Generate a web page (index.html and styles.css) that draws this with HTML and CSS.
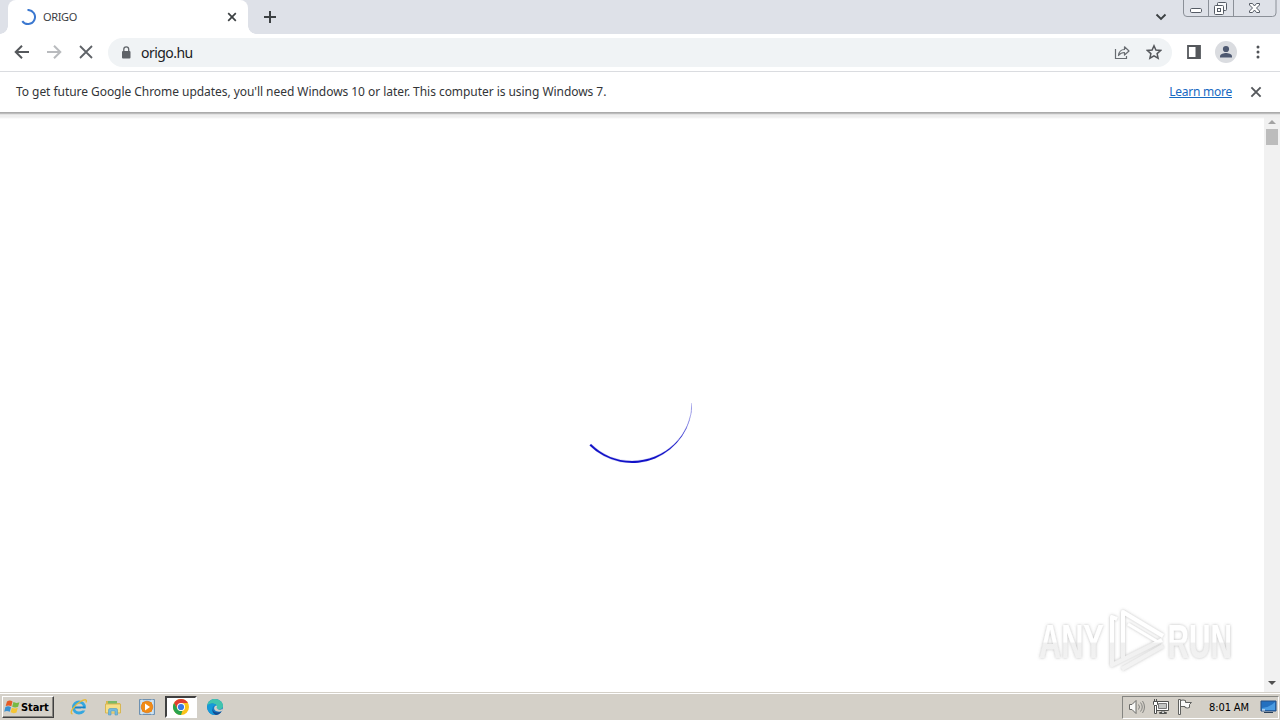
FILE: index.html
```html
<!DOCTYPE html>
<html lang="en">
<head>
<meta charset="utf-8">
<title>ORIGO</title>
<link rel="stylesheet" href="styles.css">
</head>
<body>
<div class="desktop">
  <header class="tabstrip">
    <div class="tab">
      <svg class="tab-spinner" width="16" height="16" viewBox="0 0 16 16"><path d="M7.500 1A7 7 0 1 1 2.300 12.060" fill="none" stroke="#3b78d0" stroke-width="2"/></svg>
      <span class="tab-title">ORIGO</span>
      <svg width="10" height="10" viewBox="0 0 10 10"><path d="M1.2 1.2 8.8 8.8M8.8 1.2 1.2 8.8" stroke="#3c4043" stroke-width="1.7"/></svg>
    </div>
    <svg class="new-tab" width="14" height="14" viewBox="0 0 14 14"><path d="M7 1v12M1 7h12" stroke="#3c4043" stroke-width="2"/></svg>
    <svg class="tab-search" width="12" height="8" viewBox="0 0 12 8"><path d="m1.5 1.5 4.5 4.5 4.500-4.500" fill="none" stroke="#3c4043" stroke-width="1.9"/></svg>
    <svg class="window-buttons" width="94" height="18" viewBox="0 0 94 18" fill="none">
      <path d="M.5 0v13q0 3.500 3.500 3.500h85.500q3.500 0 3.500-3.500V0M25.500 0v16M50.500 0v16" stroke="#8b9098"/>
      <g stroke="#555b65"><rect x="7.500" y="8.500" width="11" height="4" rx="1.200" fill="#fff"/>
      <rect x="34.500" y="2.500" width="9" height="8" rx="1" fill="#f7f8fa"/><rect x="31.500" y="5.500" width="9" height="9" rx="1" fill="#fff"/><rect x="34.500" y="8.500" width="3" height="3"/>
      <path d="M66.500 3.500h3l2 2.500 2-2.500h3v1.500l-3 3 3 3v1.500h-3l-2-2.500-2 2.500h-3v-1.500l3-3-3-3z" fill="#fff"/></g>
    </svg>
  </header>

  <nav class="toolbar">
    <svg class="back" width="16" height="16" viewBox="0 0 16 16"><path d="M15 8H2M8 1.700 1.700 8 8 14.300" fill="none" stroke="#55585c" stroke-width="2"/></svg>
    <svg class="forward" width="16" height="16" viewBox="0 0 16 16"><path d="M1 8h13M8 1.700 14.300 8 8 14.300" fill="none" stroke="#b9bbbe" stroke-width="2"/></svg>
    <svg class="stop" width="14" height="14" viewBox="0 0 14 14"><path d="m1 1 12 12M13 1 1 13" stroke="#5f6368" stroke-width="1.800"/></svg>
    <div class="omnibox">
      <svg width="10" height="13" viewBox="0 0 10 13"><rect x="1" y="5" width="8.500" height="7.500" rx="1" fill="#5f6368"/><path d="M2.800 5.500V3.300a2.450 2.450 0 0 1 4.900 0v2.200" fill="none" stroke="#5f6368" stroke-width="1.300"/></svg>
      <span class="url">origo.hu</span>
      <svg class="share" width="16" height="15" viewBox="0 0 16 15" fill="none" stroke="#686c71" stroke-width="1.200"><path d="M1.500 4v9.500h11V11"/><path d="M4.500 10.500c.5-4 2.500-6 6-6V1.800L15 6l-4.500 4V7.500c-3 0-4.500 1-6 3z" stroke-linejoin="round"/></svg>
      <svg class="star" width="16" height="16" viewBox="0 0 16 16"><path d="m8 1.800 1.900 4.300 4.700.4-3.500 3.100 1 4.600L8 11.800l-4.100 2.400 1-4.600-3.500-3.100 4.700-.4z" fill="none" stroke="#55585c" stroke-width="1.500"/></svg>
    </div>
    <svg class="side-panel" width="14" height="14" viewBox="0 0 14 14"><path d="M1 1h12v12H1z" fill="none" stroke="#55585c" stroke-width="1.800"/><path d="M8.500 1H13v12H8.500z" fill="#55585c"/></svg>
    <svg class="avatar" width="22" height="22" viewBox="0 0 22 22"><circle cx="11" cy="11" r="11" fill="#dadce0"/><circle cx="11" cy="8" r="3.100" fill="#4d5870"/><path d="M5 16.500v-1.300c0-2 4-3.100 6-3.100s6 1.100 6 3.100v1.300z" fill="#4d5870"/></svg>
    <svg class="kebab" width="4" height="14" viewBox="0 0 4 14" fill="#505357"><circle cx="2" cy="2" r="1.500"/><circle cx="2" cy="7" r="1.500"/><circle cx="2" cy="12" r="1.500"/></svg>
  </nav>

  <section class="infobar">
    <span class="notice">To get future Google Chrome updates, you'll need Windows 10 or later. This computer is using Windows 7.</span>
    <a class="learn">Learn more</a>
    <svg width="12" height="12" viewBox="0 0 12 12"><path d="m1.400 1.400 9.200 9.200M10.600 1.400l-9.200 9.200" stroke="#55585c" stroke-width="1.900"/></svg>
  </section>

  <main class="viewport">
    <div class="page">
      <svg class="loader" width="120" height="120" viewBox="0 0 120 120"><path d="M120 60A60 60 0 0 1 17.600 102.400L19 101A58 58 0 0 0 60 118A60 58 0 0 0 120 60z" fill="#1212c8" stroke="#1212c8" stroke-width=".2"/></svg>
      <svg class="watermark" width="220" height="76" viewBox="0 0 220 76">
        <defs><linearGradient id="fade" gradientUnits="userSpaceOnUse" x1="0" y1="8" x2="0" y2="70"><stop offset="0" stop-color="#fff"/><stop offset=".52" stop-color="#fff"/><stop offset=".53" stop-color="#f0f0f0"/><stop offset="1" stop-color="#f3f3f3"/></linearGradient>
        <linearGradient id="text-fade" gradientUnits="userSpaceOnUse" x1="0" y1="-48" x2="0" y2="14"><stop offset="0" stop-color="#fff"/><stop offset=".52" stop-color="#fff"/><stop offset=".53" stop-color="#f0f0f0"/><stop offset="1" stop-color="#f3f3f3"/></linearGradient>
        <filter id="halo" x="-10%" y="-15%" width="120%" height="130%"><feDropShadow dx="0" dy="0" stdDeviation="1.600" flood-color="#777" flood-opacity=".5"/></filter></defs>
        <g filter="url(#halo)">
          <g class="brand" fill="url(#text-fade)"><text transform="translate(9 56) scale(.64 1)">ANY</text><text transform="translate(137.500 56) scale(.62 1)">RUN</text></g>
          <g fill="none" stroke="url(#fade)" stroke-width="4" stroke-linejoin="round">
            <path d="M87 17l-5-2v48l50-25"/>
            <path d="M93 56V10l40 24"/>
            <path d="M98 22l30 18" stroke-width="3"/>
            <path d="M133 44 92 67"/>
          </g>
        </g>
      </svg>
    </div>
    <aside class="scrollbar">
      <svg width="8" height="4" viewBox="0 0 8 4"><path d="m0 4 4-4 4 4z" fill="#a3a3a3"/></svg>
      <div class="thumb"></div>
      <svg class="scroll-down" width="8" height="4" viewBox="0 0 8 4"><path d="m0 0 4 4 4-4z" fill="#505050"/></svg>
    </aside>
  </main>

  <footer class="taskbar">
    <div class="start">
      <svg width="17" height="16" viewBox="0 0 17 16"><path d="M3 2.500q3-1.800 5.500.1L7.300 7.300Q4.700 5.700 1.700 7z" fill="#e65b25"/><path d="M9.400 3.100q2.800 1.600 6 .1l-1.300 4.600q-3 1.400-5.900-.1z" fill="#78b943"/><path d="M1.400 8q3-1.400 5.600.3l-1.200 4.500Q3 11.300.2 12.700z" fill="#3a91d1"/><path d="M7.900 8.700q2.900 1.500 5.900.1l-1.300 4.600q-3 1.500-5.900-.1z" fill="#f5c534"/></svg>
      <span>Start</span>
    </div>
    <div class="quick">
      <svg width="18" height="18" viewBox="0 0 18 18"><circle cx="9" cy="9.500" r="5.500" fill="none" stroke="#35a7df" stroke-width="3"/><path d="M5 9.500h10" stroke="#1683c9" stroke-width="2"/><path d="M11 11.500h6" stroke="#d4d0c8" stroke-width="2"/><path d="M2.500 16c-4-1 2-9 8-12.500 4-2.400 7-2.500 5.500 1" fill="none" stroke="#e6ba3b" stroke-width="1.400"/></svg>
    </div>
    <div class="quick">
      <svg width="18" height="18" viewBox="0 0 18 18"><path d="M2 3h5l1 2h8v8H2z" fill="#d8b74e"/><path d="M4 3h9v4H4z" fill="#79b969"/><path d="M1.500 6h15v9h-15z" fill="#f6df88" stroke="#d7b653"/><path d="M4.500 17v-5q0-1.500 1.500-1.500h6q1.500 0 1.500 1.500v5h-2.500v-4H7v4z" fill="#75b9de" stroke="#4d9bc5" stroke-width=".6"/></svg>
    </div>
    <div class="quick">
      <svg width="18" height="18" viewBox="0 0 18 18"><path d="M1.500 1.500h15v15h-15z" fill="#bdd7eb" stroke="#6e91b1"/><path d="M4 1.500v15M14 1.500v15" stroke="#e4eff6"/><path d="M4 4h10v10H4z" fill="#f5ad50"/><circle cx="9" cy="9" r="5.800" fill="#f18c16" stroke="#d96c09" stroke-width=".6"/><path d="m7 5.600 5 3.400-5 3.400z" fill="#fff"/></svg>
    </div>
    <div class="quick active">
      <svg width="18" height="18" viewBox="0 0 18 18"><circle cx="9" cy="9" r="8" fill="#fbc31a"/><path d="M2.070 5A8 8 0 0 1 15.930 5H9L5.500 11z" fill="#e13e32"/><path d="M2.070 5 5.500 11Q7 13.500 10.500 12.500L9 17A8 8 0 0 1 2.070 5z" fill="#29a34e"/><circle cx="9" cy="9" r="4" fill="#fff"/><circle cx="9" cy="9" r="3.100" fill="#3979e5"/></svg>
    </div>
    <div class="quick">
      <svg width="18" height="18" viewBox="0 0 18 18"><circle cx="9" cy="9" r="8" fill="#147ac5"/><path d="M1.200 8C2 3 5 1 9 1c5 0 8.500 4 8 7.500-.5 3-4 3.500-6 2.500-1-.6.200-1.300 0-2.500C10.500 5 4 4 1.200 8z" fill="#41c4ae"/><path d="M1.200 8C4 4 10 5.500 11 8c-2-1.500-5 0-4.500 3.500.4 3 2.800 4.500 4.500 5.200C5 18 1 13.500 1.200 8z" fill="#169bd9"/><path d="M6.500 10.500c0 4 5 5 9.300 2.700C14 16 11.500 17 9.800 17 7 15.700 5.800 13 6.500 10.500z" fill="#164c91"/><path d="M10.800 7.500c.8 1.500-.7 2 .2 3 1.500 1.800 5 1.400 6 .3 0 1.300-.6 2.100-1.300 2.500-4.400 1.200-8.200-.8-7.500-3.800.3-1.200 1.100-2 2.600-2z" fill="#d4d0c8"/></svg>
    </div>
    <div class="tray">
      <svg class="volume" width="18" height="16" viewBox="0 0 18 16" fill="none" stroke="#6a6a67"><path d="M1.500 5.500h2.500l4-4v13l-4-4H1.500z" fill="#f9f9f7"/><path d="M10.500 5.500q2 2.500 0 5M12.500 3.500q3.500 4.500 0 9M14.500 2q4 6 0 12" stroke="#858581"/></svg>
      <svg class="network" width="18" height="16" viewBox="0 0 18 16" fill="none" stroke="#4f504e"><path d="M4.500 2.500h12v9h-12z" fill="#fff"/><path d="M6.500 4.500h8v5h-8z" fill="#c3c5c3" stroke="#777"/><path d="M7.500 14.500h7v-1h-2.500v-2h-2v2H7.500z" fill="#fff"/><path d="M1.500 2.500h4v3l-1 1h-2l-1-1zM2.500 6.500h2v8h-2zM2.500 0v2M4.500 0v2" fill="#fff"/></svg>
      <svg class="flag" width="16" height="16" viewBox="0 0 16 16"><path d="M1.500.5h2v15h-2zM3.500 1.500q2.500-1 5 0v2h6l-2 2 0 3q-2 1-4.500 0V7.500h-4.500z" fill="#fafafa" stroke="#60615f"/></svg>
      <span class="clock">8:01 AM</span>
      <svg class="show-desktop" width="17" height="14" viewBox="0 0 17 14"><path d="M1 1h15v10H1z" fill="#2470bf" stroke="#254f83"/><path d="M2 8Q9 8 15 2v8H2z" fill="#4a9be1"/><path d="M4 12h9v1H4z" fill="#283f59"/><path d="M2 10h3" stroke="#fff"/></svg>
    </div>
  </footer>
</div>
</body>
</html>
```
FILE: styles.css
```css
* { box-sizing: border-box; }
body { margin: 0; font-family: "DejaVu Sans Condensed", "DejaVu Sans", sans-serif; font-stretch: condensed; }
svg { display: block; flex: none; }
.desktop { width: 1280px; height: 720px; display: flex; flex-direction: column; overflow: hidden; background: #fff; }
.tabstrip { height: 34px; flex: none; display: flex; background: #dee1e8; padding-left: 8px; }
.tab { position: relative; width: 240px; height: 34px; display: flex; align-items: center; padding: 0 11px 0 12px; background: #fff; border-radius: 8px 8px 0 0; }
.tab::before, .tab::after { content: ""; position: absolute; bottom: 0; width: 8px; height: 8px; }
.tab::before { left: -8px; background: radial-gradient(circle at 0 0, transparent 7.500px, #fff 8px); }
.tab::after { right: -8px; background: radial-gradient(circle at 100% 0, transparent 7.500px, #fff 8px); }
.tab-title { flex: 1; margin-left: 7px; padding-bottom: 1px; font: 11px "Noto Sans", sans-serif; letter-spacing: -.35px; color: #3c4043; }
.new-tab { margin: 10px 0 0 15px; }
.tab-search { margin: 13px 16px 0 auto; }
.window-buttons { margin-right: 3px; }
.toolbar { height: 38px; flex: none; display: flex; align-items: center; padding: 0 0 1px 14px; border-bottom: 1px solid #dadce0; }
.forward { margin-left: 16px; }
.stop { margin-left: 17px; }
.omnibox { width: 1064px; height: 29px; margin-left: 15px; padding: 0 10px 0 13px; display: flex; align-items: center; background: #f0f3f5; border-radius: 15px; }
.url { margin-left: 10px; font: 14px "Noto Sans", sans-serif; letter-spacing: -.55px; color: #202124; }
.share { margin-left: auto; }
.star { margin-left: 16px; }
.side-panel { margin-left: 15px; }
.avatar { margin-left: 14px; }
.kebab { margin-left: 19px; }
.infobar { height: 40px; flex: none; display: flex; align-items: center; padding: 0 18px 0 16px; font: 12px "Noto Sans", sans-serif; color: #333538; }
.notice { white-space: nowrap; letter-spacing: -.05px; padding-bottom: 2px; }
.learn { margin-left: auto; margin-right: 18px; padding-bottom: 2px; letter-spacing: -.25px; color: #1769c2; text-decoration: underline; }
.viewport { position: relative; flex: 1; display: flex; min-height: 0; }
.viewport::before { content: ""; position: absolute; z-index: 1; inset: 0 0 auto; height: 7px; background: linear-gradient(#ababab 0 1px, #bcbcbc 1px 2px, #e2e2e2 2px 3px, #eeeeee 3px 5px, transparent); }
.page { position: relative; flex: 1; display: flex; justify-content: center; padding-top: 231px; }
.watermark { position: absolute; right: 14px; bottom: 14px; }
.brand { font: bold 48px "Liberation Sans", sans-serif; }
.scrollbar { width: 16px; display: flex; flex-direction: column; align-items: center; background: #f1f1f1; padding: 8px 0 7px; }
.thumb { width: 12px; height: 16px; margin-top: 5px; background: #bcbcbc; }
.scroll-down { margin-top: auto; }
.taskbar { height: 28px; flex: none; display: flex; align-items: center; padding: 2px 1px 1px 2px; background: #d4d0c8; border-top: 1px solid #d4d0c8; box-shadow: inset 0 1px #fff; }
.start { width: 52px; height: 22px; display: flex; align-items: center; padding: 0 1px; margin-right: 7px; border: 1px solid; border-color: #fff #404040 #404040 #fff; box-shadow: inset -1px -1px #878580; color: #000; }
.start span { font-size: 11px; font-weight: bold; letter-spacing: -.1px; }
.quick { width: 32px; height: 22px; margin-left: 2px; display: flex; align-items: center; justify-content: center; border: 1px solid transparent; }
.active { background: #fff; border: 2px solid; border-color: #404040 #fff #fff #404040; }
.tray { width: 157px; height: 23px; display: flex; align-items: center; margin-left: auto; padding: 0 1px 0 5px; border: 1px solid; border-color: #858581 #fff #fff #858581; }
.network { margin-left: 6px; }
.flag { margin-left: 7px; }
.clock { margin-left: 16px; font-size: 11px; letter-spacing: -.1px; white-space: nowrap; color: #000; }
.show-desktop { margin-left: auto; }
```
